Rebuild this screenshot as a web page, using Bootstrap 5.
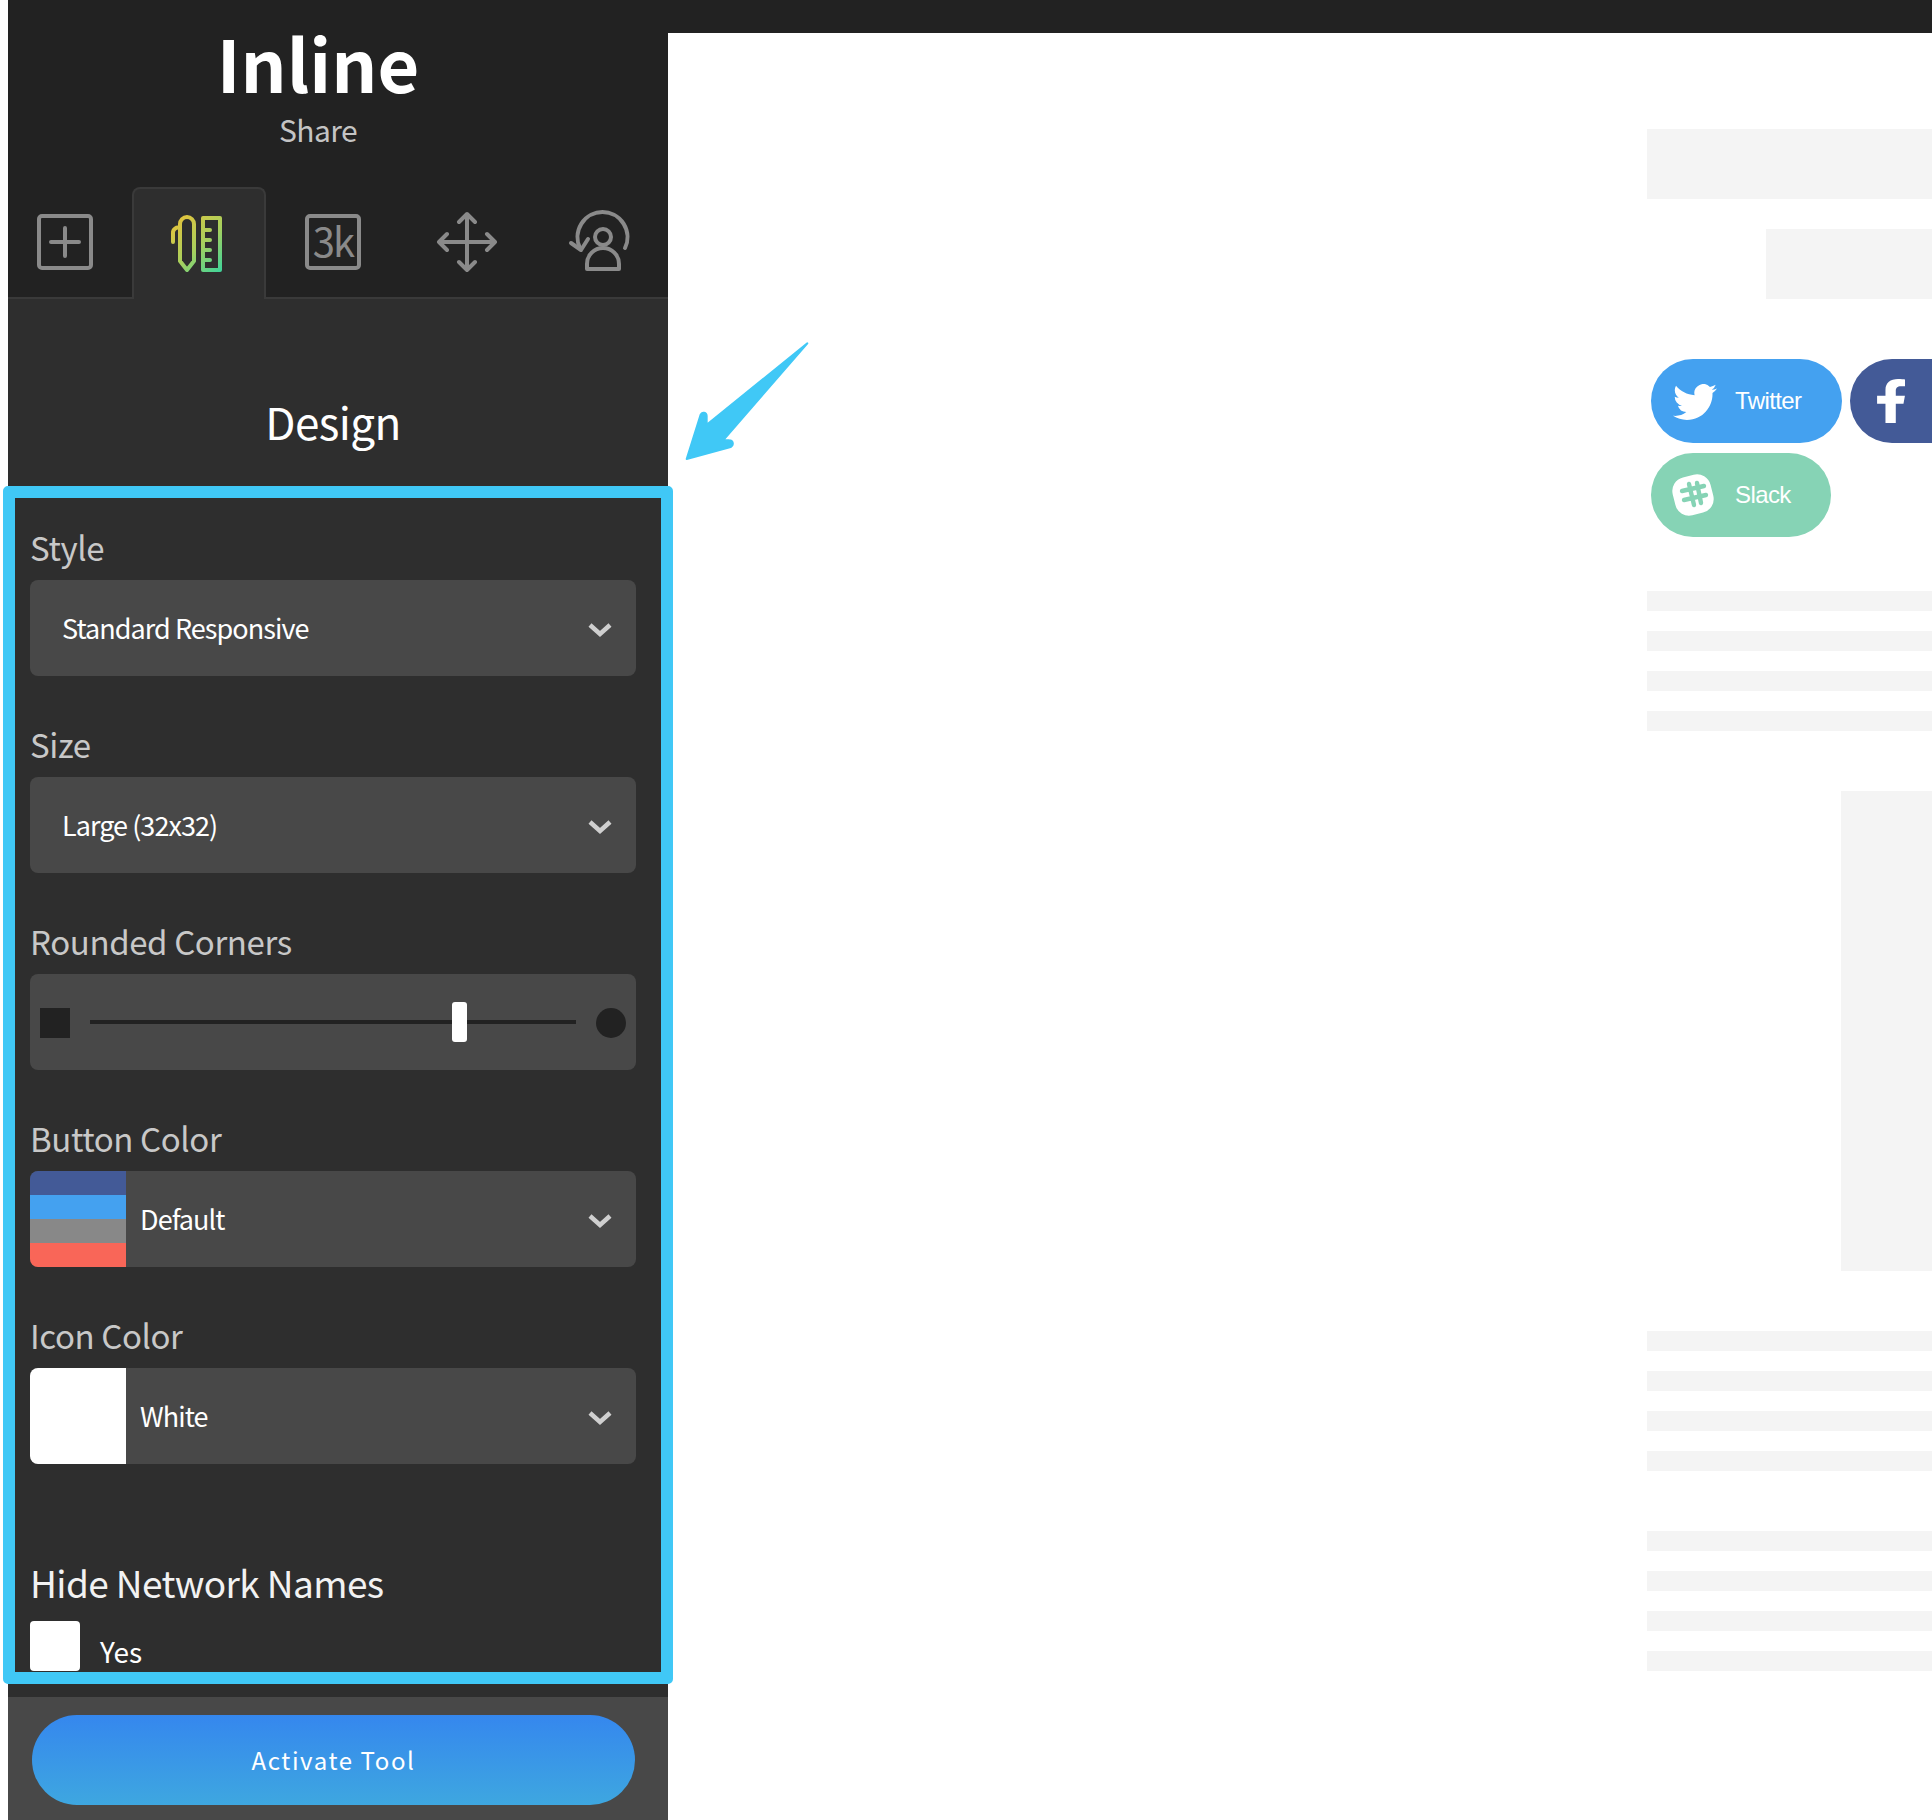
<!DOCTYPE html>
<html lang="en">
<head>
<meta charset="utf-8">
<title>Inline Share</title>
<link rel="stylesheet" href="https://cdn.jsdelivr.net/npm/bootstrap@5.3.0/dist/css/bootstrap.min.css">
<script src="https://cdn.jsdelivr.net/npm/bootstrap@5.3.0/dist/js/bootstrap.bundle.min.js"></script>
<style>
html,body{margin:0;background:#fff;}
body{width:1932px;height:1820px;overflow:hidden;position:relative;font-family:"Noto Sans CJK SC","Noto Sans",sans-serif;}
.top-strip{height:33px;margin-left:8px;background:#222;}
.shell{height:1787px;}
.side{width:660px;margin-left:8px;background:#2e2e2e;flex:none;}
.side-head{height:266px;background:#222;display:flex;flex-direction:column;}
.brand{height:154px;padding-right:40px;text-align:center;color:#fff;}
.brand-name{font-size:72px;font-weight:700;line-height:56px;padding-top:1px;}
.brand-sub{font-size:30px;line-height:40px;color:#c4c4c4;margin-top:19px;letter-spacing:-.6px;}
.tab-row{height:112px;flex-wrap:nowrap;border-bottom:2px solid #3a3a3a;}
.tab-cell{width:133px;height:110px;padding:0;border:2px solid transparent;border-bottom:0;border-radius:8px 8px 0 0;flex:none;}
.tab-cell svg{display:block;margin:-2px;}
.tab-first{width:124px;}
.tab-after{width:132px;}
.tab-on{width:134px;background:#2e2e2e;border-color:#3a3a3a;height:112px;margin-bottom:-2px;}
.panel-title{height:187px;margin:0;padding:90px 10px 0 0;text-align:center;color:#fff;font-size:44px;font-weight:400;line-height:64px;letter-spacing:-.6px;}
.opts{height:1198px;margin:0 -5px;border:12px solid #40c8f6;border-radius:5px;background:#2e2e2e;overflow:hidden;padding:30px 25px 0 15px;position:relative;}
.opt{margin-bottom:49px;}
.opt-label{display:block;margin:0 0 14px;font-size:33px;line-height:38px;color:#c8c8c8;letter-spacing:-.4px;}
.pick{height:96px;background:#484848;border-radius:8px;color:#fff;font-size:27px;line-height:40px;letter-spacing:-.95px;overflow:hidden;}
.pick-text{padding-left:32px;}
.pick-text.after{padding-left:14px;}
.chev{margin:4px 24px 0 0;flex:none;}
.swatch{width:96px;height:96px;flex:none;}
.band{height:24px;}
.slider-box{padding:0 10px;}
.end-shape{width:30px;height:30px;background:#222;flex:none;margin-top:2px;}
.track{height:4px;background:#222;margin:0 20px;position:relative;}
.thumb{position:absolute;left:362px;top:-18px;width:15px;height:40px;background:#fff;border-radius:3px;}
.hide-label{font-size:37px;line-height:56px;color:#f2f2f2;margin:90px 0 0;display:block;letter-spacing:-.6px;}
.check-row{margin-top:10px;color:#fff;font-size:28px;}
.check-box{width:50px;height:50px;background:#fff;border-radius:4px;flex:none;}
.check-text{margin-left:20px;line-height:40px;padding-top:11px;}
.foot-gap{height:13px;}
.foot{height:123px;background:#484848;padding:18px 33px 0 24px;}
.go-btn{width:603px;height:90px;border:0;border-radius:45px;color:#fff;font-size:24px;letter-spacing:1.6px;background:linear-gradient(180deg,#3587ee,#3ea7e0);}
.canvas{padding:96px 0 0 979px;min-width:0;flex:1 1 auto;overflow:hidden;}
.ghost{background:#f4f4f4;}
.g-head{height:70px;margin-bottom:30px;}
.g-sub{height:70px;margin-left:119px;}
.g-line{height:20px;margin-bottom:20px;}
.g-block{height:480px;margin:60px 0 60px 194px;}
.g-first{margin-top:54px;}
.g-group{margin-top:60px;}
.share-row{margin-left:4px;flex-wrap:nowrap;}
.share-top{margin-top:60px;}
.share{height:84px;border-radius:42px;color:#fff;font-family:"Liberation Sans",Arial,sans-serif;font-size:24px;letter-spacing:-.6px;flex:none;position:relative;}
.s-tw{width:191px;background:#44a1f0;margin-right:8px;}
.s-fb{width:191px;background:#435a97;}
.s-sl{width:180px;background:#86d3b5;margin-top:10px;}
.share span{position:absolute;left:84px;top:21px;line-height:42px;}
.share svg{position:absolute;}
.pointer{position:absolute;left:670px;top:330px;}
</style>
</head>
<body>
<div class="top-strip"></div>
<div class="shell d-flex">
  <aside class="side">
    <div class="side-head">
      <div class="brand">
        <div class="brand-name">Inline</div>
        <div class="brand-sub">Share</div>
      </div>
      <ul class="nav tab-row">
        <li class="tab-cell tab-first">
          <svg width="124" height="110" viewBox="8 187 124 110" fill="none" stroke="#8a8a8a" stroke-width="4" stroke-linecap="round" stroke-linejoin="round"><rect x="39" y="216" width="52" height="52" rx="3"/><path d="M51 242H79M65 228V256"/></svg>
        </li>
        <li class="tab-cell tab-on">
          <svg width="134" height="110" viewBox="132 187 134 110" fill="none" stroke="url(#gp)" stroke-width="4" stroke-linecap="round" stroke-linejoin="round">
            <defs><linearGradient id="gp" gradientUnits="userSpaceOnUse" x1="172" y1="216" x2="222" y2="272"><stop offset="0" stop-color="#ecc238"/><stop offset=".55" stop-color="#a6d05e"/><stop offset="1" stop-color="#3cd49c"/></linearGradient></defs>
            <path d="M180 261V224a7 7 0 0 1 14 0V261L187 270Z"/><path d="M173 242V233a5 5 0 0 1 7-5"/><rect x="203" y="218" width="17" height="52"/><path d="M203 230H210M203 240H210M203 250H210M203 260H210"/>
          </svg>
        </li>
        <li class="tab-cell tab-after">
          <svg width="132" height="110" viewBox="266 187 132 110" fill="none" stroke="#8a8a8a" stroke-width="4" stroke-linejoin="round"><rect x="307" y="216" width="52" height="52" rx="3"/><text x="333" y="257" text-anchor="middle" stroke="none" fill="#8a8a8a" font-family="Noto Sans CJK SC, sans-serif" font-size="40" font-weight="400" letter-spacing="-2">3k</text></svg>
        </li>
        <li class="tab-cell">
          <svg width="133" height="110" viewBox="398 187 133 110" fill="none" stroke="#8a8a8a" stroke-width="4" stroke-linecap="round" stroke-linejoin="round"><path d="M439 242H495M467 214V270M459 222L467 214L475 222M459 262L467 270L475 262M447 234L439 242L447 250M487 234L495 242L487 250"/></svg>
        </li>
        <li class="tab-cell">
          <svg width="133" height="110" viewBox="531 187 133 110" fill="none" stroke="#8a8a8a" stroke-width="4" stroke-linecap="round" stroke-linejoin="round"><path d="M625 248A25 25 0 1 0 580 248"/><path d="M571 243L581 250L588 239"/><circle cx="603" cy="237" r="8"/><path d="M587 269V264A16 16 0 0 1 619 264V269Z"/></svg>
        </li>
      </ul>
    </div>
    <h2 class="panel-title">Design</h2>
    <form class="opts">
      <div class="opt">
        <label class="opt-label">Style</label>
        <div class="pick d-flex align-items-center justify-content-between">
          <span class="pick-text">Standard Responsive</span>
          <svg class="chev" width="24" height="16" viewBox="0 0 24 16" fill="none" stroke="#cfcfcf" stroke-width="4.5"><path d="M2 3L12 12L22 3"/></svg>
        </div>
      </div>
      <div class="opt">
        <label class="opt-label">Size</label>
        <div class="pick d-flex align-items-center justify-content-between">
          <span class="pick-text">Large (32x32)</span>
          <svg class="chev" width="24" height="16" viewBox="0 0 24 16" fill="none" stroke="#cfcfcf" stroke-width="4.5"><path d="M2 3L12 12L22 3"/></svg>
        </div>
      </div>
      <div class="opt">
        <label class="opt-label">Rounded Corners</label>
        <div class="pick slider-box d-flex align-items-center">
          <div class="end-shape"></div>
          <div class="track flex-grow-1"><div class="thumb"></div></div>
          <div class="end-shape rounded-circle"></div>
        </div>
      </div>
      <div class="opt">
        <label class="opt-label">Button Color</label>
        <div class="pick d-flex align-items-center">
          <div class="swatch">
            <div class="band" style="background:#435a97"></div>
            <div class="band" style="background:#44a1f0"></div>
            <div class="band" style="background:#888888"></div>
            <div class="band" style="background:#f96658"></div>
          </div>
          <span class="pick-text after flex-grow-1">Default</span>
          <svg class="chev" width="24" height="16" viewBox="0 0 24 16" fill="none" stroke="#cfcfcf" stroke-width="4.5"><path d="M2 3L12 12L22 3"/></svg>
        </div>
      </div>
      <div class="opt">
        <label class="opt-label">Icon Color</label>
        <div class="pick d-flex align-items-center">
          <div class="swatch bg-white"></div>
          <span class="pick-text after flex-grow-1">White</span>
          <svg class="chev" width="24" height="16" viewBox="0 0 24 16" fill="none" stroke="#cfcfcf" stroke-width="4.5"><path d="M2 3L12 12L22 3"/></svg>
        </div>
      </div>
      <label class="hide-label">Hide Network Names</label>
      <div class="check-row d-flex align-items-center">
        <div class="check-box"></div>
        <span class="check-text">Yes</span>
      </div>
    </form>
    <div class="foot-gap"></div>
    <div class="foot">
      <button type="button" class="btn go-btn">Activate Tool</button>
    </div>
  </aside>
  <main class="canvas">
    <div class="ghost g-head"></div>
    <div class="ghost g-sub"></div>
    <div class="d-flex share-row share-top">
      <div class="share s-tw">
        <svg style="left:22px;top:25px" width="44" height="36" viewBox="0 0 24 19.6" fill="#fff"><path transform="translate(0 -2.2)" d="M23.953 4.57a10 10 0 01-2.825.775 4.958 4.958 0 002.163-2.723c-.951.555-2.005.959-3.127 1.184a4.92 4.92 0 00-8.384 4.482C7.69 8.095 4.067 6.13 1.64 3.162a4.822 4.822 0 00-.666 2.475c0 1.71.87 3.213 2.188 4.096a4.904 4.904 0 01-2.228-.616v.06a4.923 4.923 0 003.946 4.827 4.996 4.996 0 01-2.212.085 4.936 4.936 0 004.604 3.417 9.867 9.867 0 01-6.102 2.105c-.39 0-.779-.023-1.17-.067a13.995 13.995 0 007.557 2.209c9.053 0 13.998-7.496 13.998-13.985 0-.21 0-.42-.015-.63A9.935 9.935 0 0024 4.59z"/></svg>
        <span>Twitter</span>
      </div>
      <div class="share s-fb">
        <svg style="left:27px;top:20px" width="28" height="44" viewBox="22 0 272 512" preserveAspectRatio="none" fill="#fff"><path d="M279.14 288l14.22-92.66h-88.91v-60.13c0-25.35 12.42-50.06 52.24-50.06h40.42V6.26S260.43 0 225.36 0c-73.22 0-121.08 44.38-121.08 124.72v70.62H22.89V288h81.39v224h100.17V288z"/></svg>
      </div>
    </div>
    <div class="d-flex share-row">
      <div class="share s-sl">
        <svg style="left:19px;top:19px" width="46" height="46" viewBox="0 0 46 46"><rect x="3.5" y="3.5" width="39" height="39" rx="14" fill="#fff" transform="rotate(-14 23 23)"/><path d="M19 12L24 33M27 11L31 31M12 19L34 14M14 28L36 23" fill="none" stroke="#86d3b5" stroke-width="4.4" stroke-linecap="round"/></svg>
        <span>Slack</span>
      </div>
    </div>
    <div class="g-first">
      <div class="ghost g-line"></div><div class="ghost g-line"></div><div class="ghost g-line"></div><div class="ghost g-line"></div>
    </div>
    <div class="ghost g-block"></div>
    <div>
      <div class="ghost g-line"></div><div class="ghost g-line"></div><div class="ghost g-line"></div><div class="ghost g-line"></div>
    </div>
    <div class="g-group">
      <div class="ghost g-line"></div><div class="ghost g-line"></div><div class="ghost g-line"></div><div class="ghost g-line"></div>
    </div>
  </main>
</div>
<svg class="pointer" width="160" height="140" viewBox="0 0 480 420"><path d="M412 40L160 330L178 331C190 331 192 346 182 351L50 387L92 254C96 244 110 248 110 258L110 284Z" fill="#40c8f6" stroke="#40c8f6" stroke-width="6" stroke-linejoin="round"/></svg>
</body>
</html>
